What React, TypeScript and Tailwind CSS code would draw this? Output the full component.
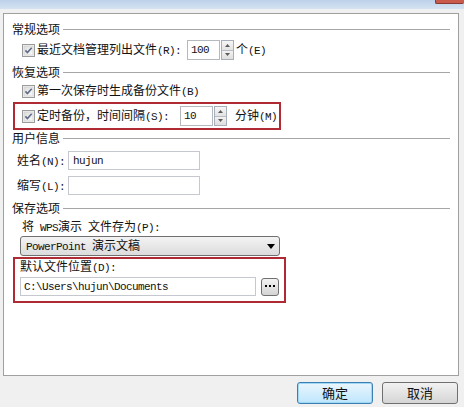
import React from "react";

// half-width latin text, SimSun style (6px advance)
function M({ children }: { children: React.ReactNode }) {
  return (
    <span className="font-['Liberation_Mono',monospace] text-[11px] tracking-[-0.6px] whitespace-pre">
      {children}
    </span>
  );
}

function Check() {
  return (
    <svg width="13" height="13" viewBox="0 0 13 13" className="shrink-0">
      <defs>
        <linearGradient id="cb" x1="0" y1="0" x2="1" y2="1">
          <stop offset="0" stopColor="#dcdcdc" />
          <stop offset="1" stopColor="#fbfbfb" />
        </linearGradient>
      </defs>
      <rect x="0.5" y="0.5" width="12" height="12" fill="#f4f4f4" stroke="#9a9b9b" />
      <rect x="2" y="2" width="9" height="9" fill="url(#cb)" stroke="#cacaca" strokeWidth="0.6" />
      <path d="M3.4 6.4 L5.4 8.5 L9.7 3.7" fill="none" stroke="#5d6d88" strokeWidth="1.6" />
    </svg>
  );
}

function Spin() {
  return (
    <div className="ml-[1px] flex h-[20px] w-[13px] flex-col border border-[#a9afb8] bg-[#eeeeee]">
      <div className="flex flex-1 items-center justify-center border-b border-[#b8bdc4] bg-gradient-to-b from-[#f6f6f6] to-[#e3e3e3]">
        <svg width="5" height="3" viewBox="0 0 5 3">
          <path d="M0 3 L2.5 0 L5 3 Z" fill="#5a5a5a" />
        </svg>
      </div>
      <div className="flex flex-1 items-center justify-center bg-gradient-to-b from-[#f2f2f2] to-[#dedede]">
        <svg width="5" height="3" viewBox="0 0 5 3">
          <path d="M0 0 L2.5 3 L5 0 Z" fill="#5a5a5a" />
        </svg>
      </div>
    </div>
  );
}

function Section({ title, className = "" }: { title: string; className?: string }) {
  return (
    <div className={`ml-[8px] mr-[8px] flex h-[16px] items-center ${className}`}>
      <span>{title}</span>
      <div className="ml-[3px] h-[1px] flex-1 bg-[#a6a6a6]" />
    </div>
  );
}

export default function App() {
  return (
    <div className="relative h-[407px] w-[464px] overflow-hidden bg-[#f0f0f0] font-['Noto_Sans_CJK_SC','Noto_Sans',sans-serif] text-[12px] leading-[16px] text-[#111]">
      {/* title bar strip */}
      <div className="flex h-[9px] justify-end bg-gradient-to-b from-[#bdd1e9] to-[#d5e3f2]">
        <div className="h-[4px] w-[29px] rounded-b-[2px] border-b border-l border-[#8a3a33] bg-[#c95a4c]" />
      </div>

      <div className="ml-[3px] mt-[4px] flex h-[363px] w-[456px] flex-col border border-[#a0a0a0] bg-white">
        <Section title="常规选项" className="mt-[7px]" />
        <div className="mt-[3px] ml-[18px] flex h-[20px] items-center">
          <Check />
          <span className="ml-[2px]">
            最近文档管理列出文件<M>(R):</M>
          </span>
          <div className="ml-[6px] flex h-[20px] w-[33px] items-center border border-[#b4b9c0] pl-[3px]">
            <M>100</M>
          </div>
          <Spin />
          <span className="ml-[2px]">
            个<M>(E)</M>
          </span>
        </div>

        <Section title="恢复选项" className="mt-[4px]" />
        <div className="mt-[2px] ml-[18px] flex h-[18px] items-center">
          <Check />
          <span className="ml-[2px]">
            第一次保存时生成备份文件<M>(B)</M>
          </span>
        </div>

        <div className="mt-[2px] ml-[9px] flex h-[28px] w-[268px] items-center border-2 border-[#b02a34] pl-[7px]">
          <Check />
          <span className="ml-[2px]">
            定时备份，时间间隔<M>(S):</M>
          </span>
          <div className="ml-[11px] flex h-[20px] w-[33px] items-center border border-[#b4b9c0] pl-[3px]">
            <M>10</M>
          </div>
          <Spin />
          <span className="ml-[8px]">
            分钟<M>(M)</M>
          </span>
        </div>

        <Section title="用户信息" />
        <div className="mt-[5px] ml-[13px] flex h-[19px] items-center">
          <span>
            姓名<M>(N):</M>
          </span>
          <div className="ml-[3px] flex h-[19px] w-[132px] items-center border border-[#c5c9cf] pl-[4px]">
            <M>hujun</M>
          </div>
        </div>
        <div className="mt-[6px] ml-[13px] flex h-[19px] items-center">
          <span>
            缩写<M>(L):</M>
          </span>
          <div className="ml-[3px] h-[19px] w-[132px] border border-[#c5c9cf]" />
        </div>

        <Section title="保存选项" className="mt-[5px]" />
        <div className="mt-[3px] ml-[18px] flex h-[16px] items-center">
          <span>
            将<M> WPS</M>演示<M> </M>文件存为<M>(P):</M>
          </span>
        </div>
        <div className="mt-[1px] ml-[16px] flex h-[20px] w-[260px] items-center justify-between rounded-[3px] border border-[#707070] bg-gradient-to-b from-[#f3f3f3] to-[#dcdcdc] pl-[5px] pr-[4px]">
          <span>
            <M>PowerPoint </M>演示文稿
          </span>
          <svg width="8" height="5" viewBox="0 0 8 5">
            <path d="M0 0 L8 0 L4 5 Z" fill="#000" />
          </svg>
        </div>

        <div className="mt-[1px] ml-[9px] flex h-[46px] w-[273px] flex-col border-2 border-[#b02a34] pl-[5px]">
          <div className="flex h-[16px] items-center">
            <span>
              默认文件位置<M>(D):</M>
            </span>
          </div>
          <div className="mt-[2px] flex items-center">
            <div className="flex h-[19px] w-[236px] items-center border border-[#c5c9cf] pl-[3px]">
              <M>C:\Users\hujun\Documents</M>
            </div>
            <div className="ml-[5px] flex h-[18px] w-[18px] items-center justify-center rounded-[3px] border border-[#707070] bg-gradient-to-b from-[#f3f3f3] to-[#d4d4d4]">
              <svg width="10" height="3" viewBox="0 0 10 3">
                <rect x="0" y="0" width="2" height="2" fill="#000" />
                <rect x="4" y="0" width="2" height="2" fill="#000" />
                <rect x="8" y="0" width="2" height="2" fill="#000" />
              </svg>
            </div>
          </div>
        </div>
      </div>

      <div className="mt-[6px] mr-[6px] flex justify-end gap-[9px]">
        <div className="flex h-[22px] w-[76px] items-center justify-center rounded-[3px] border border-[#3c7fb1] bg-gradient-to-b from-[#eaf6fd] to-[#bee6fd] text-[13px] shadow-[inset_0_0_0_1px_#9fd7f5]">
          确定
        </div>
        <div className="flex h-[22px] w-[76px] items-center justify-center rounded-[3px] border border-[#707070] bg-gradient-to-b from-[#f2f2f2] to-[#d5d5d5] text-[13px]">
          取消
        </div>
      </div>
    </div>
  );
}
